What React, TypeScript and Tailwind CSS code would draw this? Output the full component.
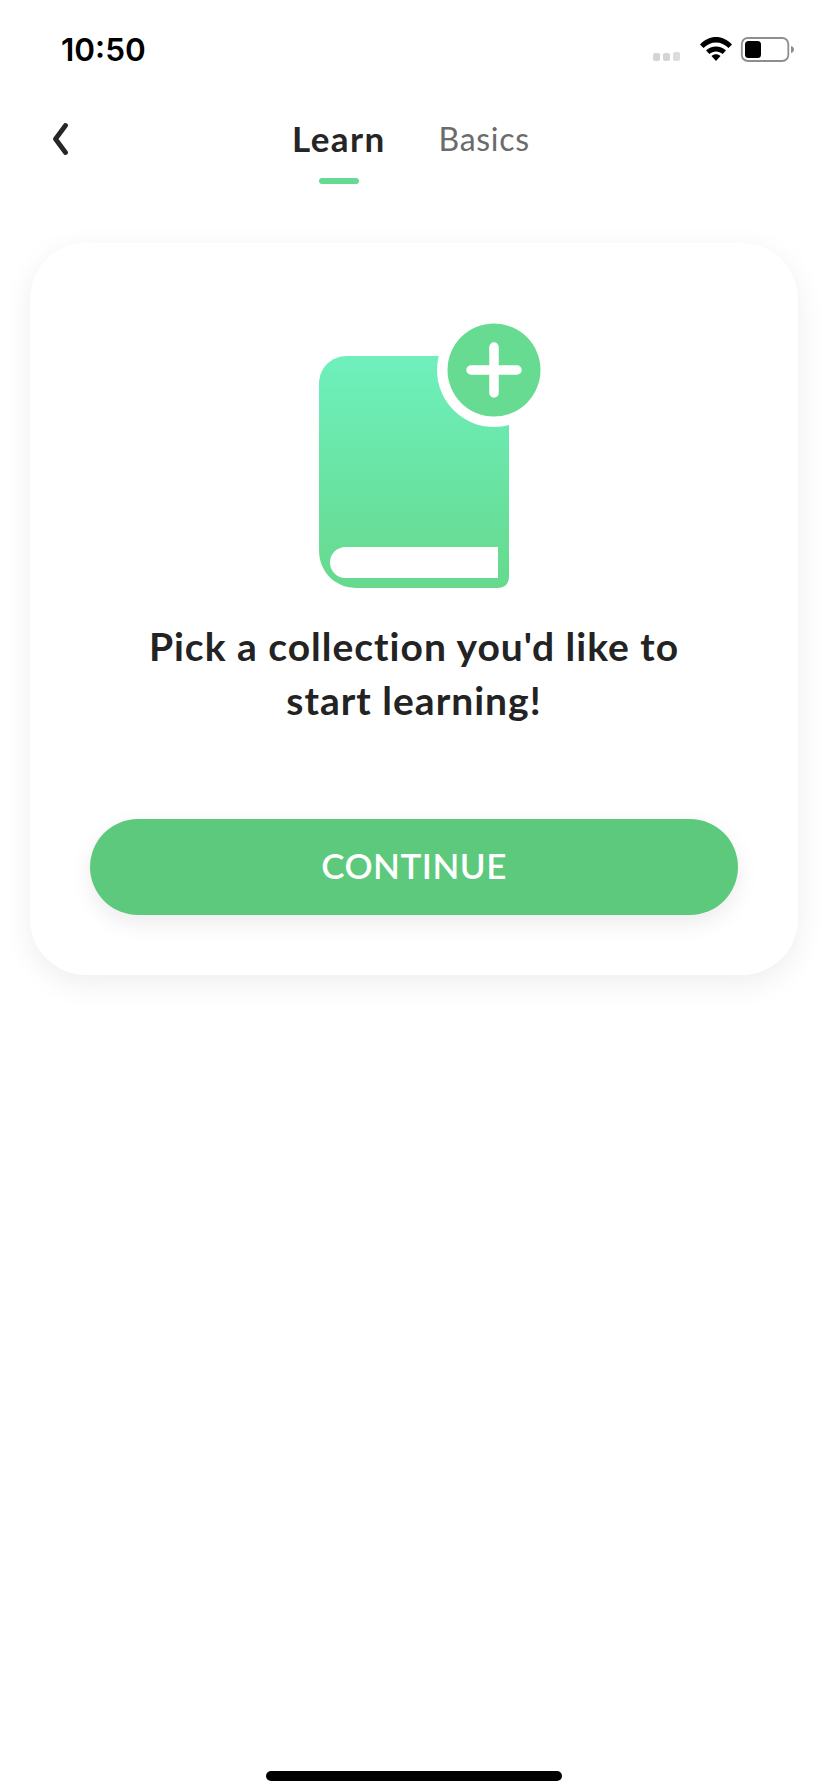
export default function App() {
  return (
    <div className="w-[828px] h-[1792px] bg-white flex flex-col font-['Lato',sans-serif] overflow-hidden">
      <div className="h-[88px] flex items-start pt-[31px] pl-[61px] pr-[34px] justify-between">
        <span className="font-['Inter',sans-serif] font-semibold text-[31.5px] leading-[38px] text-black">10:50</span>
        <svg width="141" height="26" viewBox="653 37 141 26" className="mt-[6px]">
          <rect x="653" y="53" width="7" height="8" rx="2" fill="#d4d4d4" />
          <rect x="663" y="53" width="7" height="8" rx="2" fill="#d4d4d4" />
          <rect x="673" y="52" width="7" height="9" rx="2" fill="#dcdcdc" />
          <path d="M700 44.5C709 34.5 723 34.5 732 44.5L728.5 48C721.5 40.5 710.5 40.5 703.5 48Z" fill="#000" />
          <path d="M706 50.5C711.5 45 720.5 45 726 50.5L722.5 54C719 50.5 713 50.5 709.5 54Z" fill="#000" />
          <path d="M711.5 56C714 53.8 718 53.8 720.5 56L716 61Z" fill="#000" />
          <rect x="741.8" y="38" width="46.5" height="23" rx="6" fill="none" stroke="#8e8e8e" strokeWidth="1.8" />
          <rect x="745" y="41" width="16" height="17" rx="3.5" fill="#000" />
          <path d="M791 46C793 46.5 794 48 794 49.500C794 51 793 52.500 791 53Z" fill="#8e8e8e" />
        </svg>
      </div>

      <div className="h-[100px] flex items-start relative">
        <svg width="15" height="32" viewBox="53 123 15 32" className="absolute left-[53px] top-[35px]">
          <path d="M65.500 125.500L55.500 139L65.500 152.500" fill="none" stroke="#262626" strokeWidth="4.800" strokeLinecap="round" strokeLinejoin="round" />
        </svg>
        <div className="flex items-start gap-[53px] ml-[292px] pt-[28px]">
          <div className="flex flex-col items-center">
            <span className="text-[35px] leading-[44px] font-bold text-[#252525] tracking-[1.400px]">Learn</span>
            <div className="w-[40px] h-[6px] rounded-full bg-[#66d994] mt-[18px]" />
          </div>
          <span className="text-[32px] leading-[44px] mt-[1px] font-normal text-[#6b6b6b] tracking-[0.700px]">Basics</span>
        </div>
      </div>

      <div className="mt-[55px] mx-[30px] h-[732px] rounded-[56px] bg-white shadow-[0_8px_30px_rgba(0,0,0,0.07)] flex flex-col items-center pt-[77px] px-[60px]">
        <svg width="190" height="268" viewBox="319 320 190 268" className="overflow-visible">
          <defs>
            <linearGradient id="bookGrad" gradientUnits="userSpaceOnUse" x1="0" y1="356" x2="0" y2="588">
              <stop offset="0" stopColor="#6ef0bd" />
              <stop offset="1" stopColor="#66d98d" />
            </linearGradient>
          </defs>
          <path d="M347 356H509V576Q509 588 497 588H357C335 588 319 572 319 550V384C319 368 331 356 347 356Z" fill="url(#bookGrad)" />
          <path d="M345.500 547H498V578H345.500A15.500 15.500 0 0 1 345.500 547Z" fill="#fff" />
          <circle cx="494" cy="370" r="57" fill="#fff" />
          <path d="M509 320H552V420H509Z" fill="#fff" />
          <circle cx="494" cy="370" r="46.500" fill="#66db91" />
          <path d="M494 347V393M471 370H517" stroke="#fff" strokeWidth="9.500" strokeLinecap="round" />
        </svg>
        <p className="mt-[31px] w-[648px] text-center text-[39px] leading-[54px] font-bold text-[#232323] tracking-[1px]">
          Pick a collection you'd like to
          <br />
          start learning!
        </p>
        <button className="mt-[92px] w-[648px] h-[96px] shrink-0 rounded-full bg-[#5cc97c] shadow-[0_8px_22px_rgba(0,0,0,0.08)] text-white text-[35px] font-semibold tracking-[0.500px] pb-[4px]">
          CONTINUE
        </button>
      </div>

      <div className="mt-auto mb-[11px] mx-auto w-[296px] h-[10px] rounded-full bg-black" />
    </div>
  );
}
